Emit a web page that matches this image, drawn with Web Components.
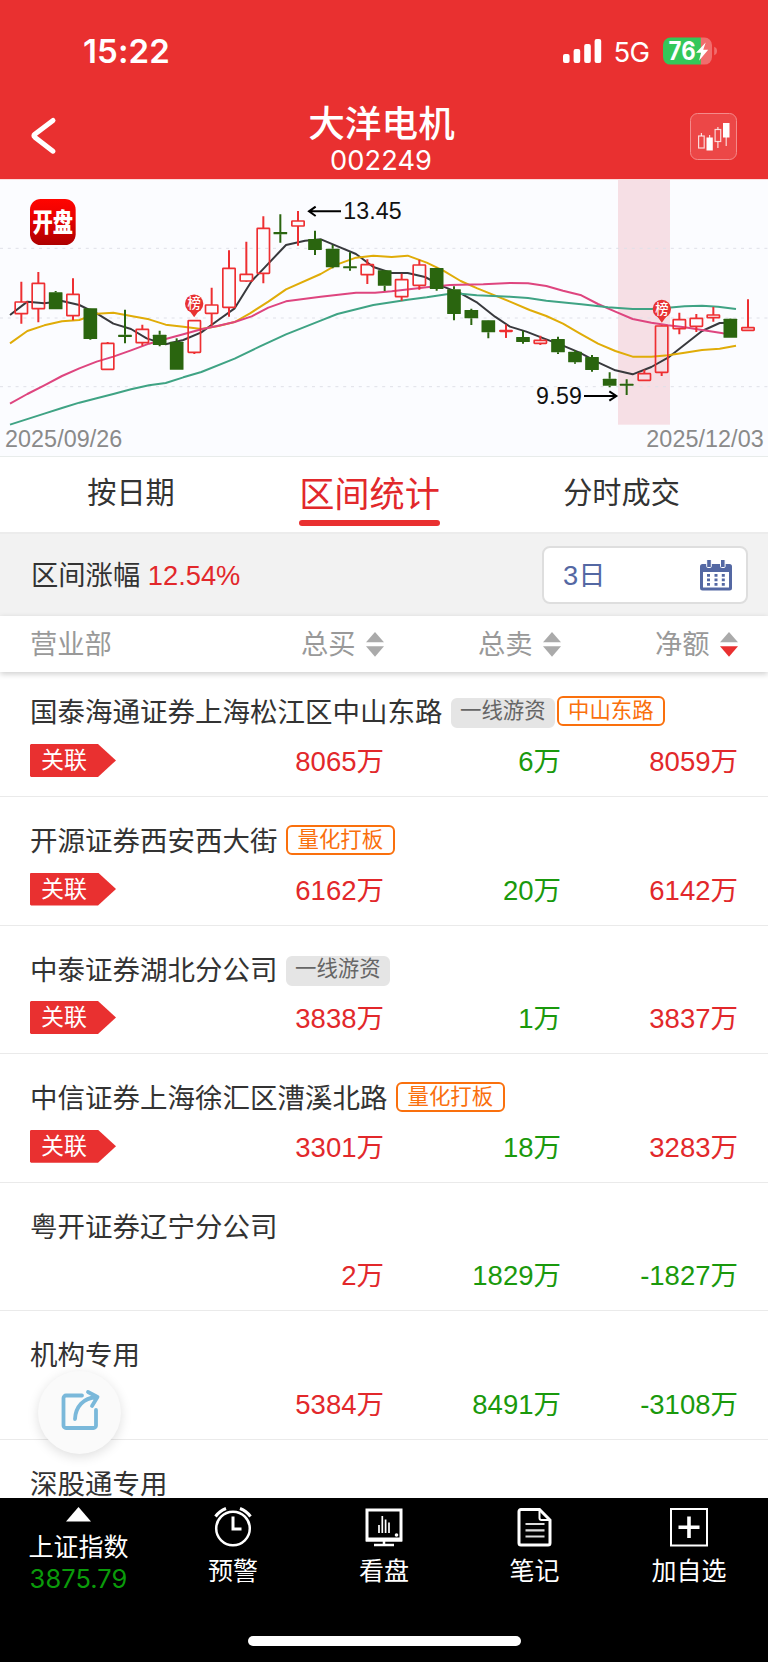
<!DOCTYPE html>
<html lang="zh-CN">
<head>
<meta charset="utf-8">
<title>大洋电机 002249</title>
<style>
html,body{margin:0;padding:0;background:#fff}
body{width:768px;height:1663px;overflow:hidden;font-family:"Liberation Sans","Noto Sans CJK SC",sans-serif;color:#333}
</style>
</head>
<body>
<stock-app></stock-app>
<script>
const define = (name, html, setup) => customElements.define(name, class extends HTMLElement {
  connectedCallback() {
    if (this.shadowRoot) return;
    const t = document.createElement('template');
    t.innerHTML = html;
    const root = this.attachShadow({mode: 'open'});
    root.appendChild(t.content.cloneNode(true));
    if (setup) setup(this, root);
  }
});

define('status-bar', `
<style>
:host{display:flex;height:102px;box-sizing:border-box;padding:33px 49.500px 0 83px;color:#fff;font-family:Inter,sans-serif;align-items:flex-start}
.time{flex:1;font-size:33px;font-weight:600;line-height:37px;letter-spacing:.1px}
svg{display:block}
.sig{margin:6px 12px 0 0}
.net{font-size:27.500px;line-height:39px;width:49px;letter-spacing:-.6px}
.bat{margin-top:4px}
</style>
<div class="time">15:22</div>
<svg class="sig" width="39" height="25" fill="#fff"><rect x="0" y="15" width="6.600" height="9" rx="2"/><rect x="10.600" y="10" width="6.600" height="14" rx="2"/><rect x="21.200" y="5" width="6.600" height="19" rx="2"/><rect x="31.600" y="0" width="6.600" height="24" rx="2"/></svg>
<div class="net">5G</div>
<svg class="bat" width="56" height="28" viewBox="0 0 56 28"><defs><clipPath id="b"><rect x="0" y=".6" width="49" height="27" rx="7.500"/></clipPath></defs>
<g clip-path="url(#b)"><rect width="38" height="28" fill="#34c759"/><rect x="37.800" width="12" height="28" fill="#f16d6d"/></g>
<path d="M51.200 9.800q2.800 1 2.800 4.200t-2.800 4.200z" fill="#f16d6d"/>
<text x="5.600" y="23" font-size="25" font-weight="700" fill="#fff" textLength="27" lengthAdjust="spacingAndGlyphs">76</text>
<path d="M42.700 5.500L33 15.800h5.100L36 23.800l9.200-11h-5z" fill="#fff"/></svg>`);

define('title-bar', `
<style>
:host{display:grid;grid-template-columns:1fr 200px 1fr;height:77px;color:#fff}
.back{padding:13px 0 0 29px}
.mid{text-align:center;display:flex;flex-direction:column;position:relative;left:-2.500px}
.name{font-size:36.600px;font-weight:500;line-height:46px;height:44px;white-space:nowrap;letter-spacing:.1px}
.code{font-family:Inter,sans-serif;font-size:27.200px;font-weight:400;line-height:30px;letter-spacing:.1px;margin-left:-1px}
.kl{justify-self:end;padding:10.500px 31.500px 0 0}
svg{display:block}
</style>
<div class="back"><svg width="30" height="42" fill="none" stroke="#fff" stroke-width="5" stroke-linecap="round" stroke-linejoin="round"><path d="M24 5.500L5.800 19.200q-1.800 1.500 0 3L24 36.200"/></svg></div>
<div class="mid"><div class="name"><slot name="name"></slot></div><div class="code"><slot name="code"></slot></div></div>
<div class="kl"><svg width="47" height="47" viewBox="0 0 47 47"><rect x=".5" y=".5" width="46" height="46" rx="7" fill="#ec4747" stroke="#f48a8a"/>
<g fill="none" stroke="#fff" stroke-opacity=".8" stroke-width="1.200"><rect x="8.600" y="23" width="5.600" height="12"/><path d="M11.400 20v3M19.600 22v3M27.900 14v2.500M27.900 28.500v6.500M36.200 23v10"/><rect x="25.100" y="16.500" width="5.600" height="12"/></g>
<path fill="#fff" d="M16.500 24.500h6.300V37.500h-6.300zM33 10h6.500v14.500H33z"/></svg></div>`);

/* Candles: [x, high, bodyTop, bodyBottom, low, rising], in thirds of a pixel. */
const CANDLES = [
[64,320,381,416,446,1],[115,291,325,401,442,1],[167,348,352,403,403,0],[219,310,358,422,436,1],[271,399,400,492,494,0],[323,501,505,583,583,1],[375,404,479,486,505,0],[427,449,463,503,512,1],[479,467,479,510,514,0],[530,490,500,584,584,0],[583,436,437,532,537,1],[635,338,390,415,452,1],[687,226,280,397,425,1],[739,200,298,318,320,1],
[790,124,160,295,325,1],[841,118,171,178,203,0],[894,108,138,153,212,1],[945,167,192,225,240,0],[998,210,221,277,280,0],[1050,232,274,280,287,0],[1102,253,269,299,327,1],[1154,285,286,332,348,0],[1205,296,314,365,377,1],[1258,254,270,331,344,1],[1310,278,279,342,347,0],[1362,334,343,417,436,0],[1414,401,405,430,450,0],[1465,435,436,472,490,0],[1518,449,467,469,488,1],
[1569,467,486,501,506,0],[1621,482,496,505,510,1],[1674,485,492,532,537,0],[1725,525,530,562,566,0],[1776,540,546,585,590,0],[1829,592,611,632,637,0],[1880,613,626,632,660,0],[1933,584,596,616,616,1],[1985,451,453,592,603,1],[2038,413,434,461,478,1],[2089,417,430,454,471,1],[2140,396,420,428,440,1],[2191,430,431,488,488,0],[2244,373,458,466,466,1]];
const AVERAGES = {
'#38393d':'30,420 82,380 133,385 186,378 238,390 290,415 340,446 393,462 440,490 497,508 550,495 604,472 655,435 704,400 755,318 780,292 858,210 915,197 963,193 1015,215 1068,237 1120,276 1175,294 1223,294 1275,306 1330,335 1382,355 1432,383 1485,425 1530,455 1579,470 1631,490 1689,512 1739,533 1794,562 1846,586 1898,598 1954,576 2004,548 2106,468 2159,444 2208,443',
'#e0ac08':'30,505 82,468 133,451 186,439 238,435 290,416 340,413 393,423 447,433 497,449 550,455 604,462 655,453 704,441 750,415 805,380 858,343 962,297 1012,268 1068,248 1120,242 1175,246 1223,242 1280,263 1330,287 1382,318 1432,340 1530,380 1589,405 1639,423 1689,446 1739,475 1794,506 1846,528 1898,545 1954,545 2004,541 2054,533 2106,525 2159,521 2208,512',
'#de457f':'30,686 82,657 133,631 186,603 238,580 290,560 340,545 393,526 447,506 497,492 550,478 604,463 655,452 704,441 755,424 805,398 858,379 962,365 1068,353 1125,353 1175,349 1280,337 1350,330 1450,328 1530,324 1584,325 1639,333 1689,347 1744,361 1794,387 1846,410 1898,432 1954,443 2004,451 2054,457 2106,465 2169,475 2208,480',
'#3fa384':'30,749 133,716 186,699 238,683 290,670 340,657 393,643 447,631 497,624 550,607 604,591 704,551 780,514 858,478 962,437 1012,417 1120,390 1223,374 1280,367 1340,358 1382,356 1430,361 1530,365 1584,369 1639,377 1744,388 1824,397 1898,402 1954,402 2004,398 2054,394 2106,392 2154,395 2208,402'};
define('k-line-chart', `
<style>
:host{display:block;height:278px;background:#fbfcff;border-top:1px solid #fbdcdc;border-bottom:1px solid #e8eceb;box-sizing:border-box}
svg{display:block;margin-top:-1px}
text{font-family:"Liberation Sans","Noto Sans CJK SC",sans-serif}
</style>
<svg width="768" height="278" viewBox="0 12 2304 834">
<defs><linearGradient id="g" x2="0" y2="1"><stop stop-color="#ff0500"/><stop offset=".35" stop-color="#ee0202"/><stop offset="1" stop-color="#ad0000"/></linearGradient></defs>
<rect x="1854" y="15" width="156" height="734" fill="#f6dfe5"/>
<path d="M0 220H2304M0 429H2304M0 635H2304" stroke="#dfe0e8" stroke-width="3" stroke-dasharray="9 14.400"/>
<g id="ma" fill="none" stroke-width="6" stroke-linejoin="round"></g>
<g id="k"></g>
<g id="pins"></g>
<rect x="90" y="72" width="137" height="138" rx="32" fill="url(#g)"/>
<text transform="translate(158.500 172) scale(1 1.280)" font-size="61" font-weight="900" fill="#fff" text-anchor="middle" style="font-family:'Noto Sans CJK SC',sans-serif">开盘</text>
<g fill="none" stroke="#000" stroke-width="6"><path d="M1023 109H928M947 95L927 109L947 123M1752 663H1847M1828 649L1849 663L1828 677"/></g>
<g font-size="69.500" fill="#111"><text x="1030" y="132" textLength="175">13.45</text><text x="1608" y="686" textLength="138">9.59</text></g>
<g font-size="70" fill="#8a8a8a"><text x="15" y="817" textLength="352">2025/09/26</text><text x="1939" y="817" textLength="352">2025/12/03</text></g>
</svg>`, (h, r) => {
  r.getElementById('ma').innerHTML = Object.entries(AVERAGES).map(([c, p]) => `<polyline stroke="${c}" points="${p}"/>`).join('');
  r.getElementById('k').innerHTML = CANDLES.map(([x, hi, t, b, lo, up]) => {
    const c = up ? '#ee2f32' : '#2a650f', w = up ? 37 : 41;
    return `<path d="M${x} ${hi}V${t}M${x} ${b}V${lo}" stroke="${c}" stroke-width="6"/><rect x="${x - w / 2}" y="${t}" width="${w}" height="${b - t}" rx="1.5" fill="${up ? 'none' : c}" ${up ? `stroke="${c}" stroke-width="5"` : ''}/>`;
  }).join('') + '<path d="M1518 449V488" stroke="#ee2f32" stroke-width="6"/><path d="M841 171V178M1050 274V280M375 479V486M1880 626V632" stroke="#2a650f" stroke-width="6"/>';
  r.getElementById('pins').innerHTML = [[582.5, 386], [1985.500, 402]].map(([x, y]) =>
    `<path d="M${x - 15} ${y + 20}L${x} ${y + 41}L${x + 15} ${y + 20}z" fill="#e83232"/><circle cx="${x}" cy="${y}" r="27.500" fill="#e83232"/><text x="${x}" y="${y + 14}" font-size="40" font-weight="500" fill="#fff" text-anchor="middle">榜</text>`).join('');
});

define('tab-bar', `
<style>
:host{display:grid;grid-template-columns:262px 215px 1fr;height:75px;background:#fff;text-align:center;font-size:29.200px;line-height:73px}
.on{color:#e2282b;font-size:35.200px;line-height:75px;justify-self:center;position:relative;height:75px}
.on::after{content:"";position:absolute;left:0;right:0;bottom:6px;height:6px;border-radius:3px;background:#e93030}
.r{margin-left:-2px}
</style>
<div>按日期</div><div class="on">区间统计</div><div class="r">分时成交</div>`);

define('range-filter', `
<style>
:host{display:flex;height:84px;background:#f2f2f2;border-top:2px solid #ececec;box-sizing:border-box;padding:0 20px 0 31px;justify-content:space-between;align-items:flex-start;font-size:27.300px}
.l{line-height:84px}
b{font-weight:400;color:#e2282b}
.box{box-sizing:border-box;width:206px;height:58px;margin-top:12px;border:2px solid #dedede;border-radius:8px;background:#fff;display:flex;justify-content:space-between;padding:0 14px 0 19px;color:#5468a3;line-height:56px}
svg{display:block;margin-top:12px}
</style>
<div class="l">区间涨幅 <b>12.54%</b></div>
<div class="box"><span>3日</span>
<svg width="32" height="31" viewBox="0 0 32 31"><rect y="4" width="32" height="26.500" rx="2.500" fill="#5468a3"/><path fill="#fff" d="M3 12h26v15.500H3z"/><g stroke="#fff" stroke-width="1"><rect x="6.700" y="-1" width="4.600" height="8.500" rx="1" fill="#5468a3"/><rect x="20.500" y="-1" width="4.600" height="8.500" rx="1" fill="#5468a3"/></g><path d="M8.500 14v12M16 14v12M23.300 14v12" stroke="#5468a3" stroke-width="3" stroke-dasharray="2.800 1.700"/></svg></div>`);

define('sort-label', `
<style>:host{display:flex;justify-content:flex-end;align-items:center;gap:10px}svg{display:block}</style>
<span><slot></slot></span><svg width="18" height="25"><path d="M9 0L18 10.300H0z" fill="#aaa"/><path id="d" d="M0 14.300h18L9 24.700z" fill="#aaa"/></svg>`,
(h, r) => { if (h.hasAttribute('desc')) r.getElementById('d').setAttribute('fill', '#e93030'); });

define('list-head', `
<style>
:host{display:grid;grid-template-columns:1fr 177px 177px;height:56px;padding:0 30.500px 0 30px;background:#fff;color:#999;font-size:27.300px;line-height:57px;box-shadow:0 2px 6px rgba(0,0,0,.2);position:relative;z-index:1}
.first{display:grid;grid-template-columns:1fr auto}
</style>
<div class="first"><span>营业部</span><sort-label>总买</sort-label></div><sort-label>总卖</sort-label><sort-label desc>净额</sort-label>`);

define('seat-tag', `
<style>
:host{display:block;box-sizing:border-box;height:30px;border-radius:6px;font-size:21.400px;line-height:26px;white-space:nowrap;border:2px solid #fa700d;color:#fa700d;padding:0 9.500px;margin-top:1px}
:host([plain]){border-color:#e5e5e5;background:#e5e5e5;color:#666;line-height:22px;padding:0 7px;margin-top:3px;margin-right:2px}
</style><slot></slot>`);

define('seat-row', `
<style>
:host{display:block;height:128.600px;box-sizing:border-box;border-bottom:1px solid #eaeaea;padding:28px 30px 0;font-size:27.500px}
.top{display:flex;height:32px;line-height:33px;white-space:nowrap}
.tags{display:flex;margin-left:8.500px;margin-top:0;height:32px;align-items:flex-start;position:relative;top:-1px}
.vals{display:grid;grid-template-columns:354px 177px 177px;height:33px;margin-top:15.500px;line-height:35px;text-align:right;color:#e2282b}
.first{display:flex;justify-content:space-between}
.flag{width:86px;height:33px;box-sizing:border-box;text-align:left;padding-left:11px;line-height:33px;background:#e93030;color:#fff;font-size:23px;clip-path:polygon(0 1px,1px 0,68px 0,100% 50%,68px 100%,1px 100%,0 32px)}
.g{color:#1a990c}
</style>
<div class="top"><span id="n"></span><div class="tags"><slot></slot></div></div>
<div class="vals"><div class="first"><span id="f"></span><span id="a"></span></div><span class="g" id="b"></span><span id="c"></span></div>`,
(h, r) => {
  const $ = i => r.getElementById(i), [a, b, c] = (h.getAttribute('values') || ',,').split(',');
  $('n').textContent = h.getAttribute('name');
  $('a').textContent = a; $('b').textContent = b; $('c').textContent = c;
  if (c.startsWith('-')) $('c').className = 'g';
  if (h.hasAttribute('linked')) { $('f').className = 'flag'; $('f').textContent = '关联'; }
});

define('share-button', `
<style>
:host{position:absolute;left:38px;top:1370.500px;width:83px;height:83px;border-radius:50%;background:#fafafa;box-shadow:0 3px 12px rgba(0,0,0,.13);z-index:2}
svg{display:block}
</style>
<svg width="83" height="83" viewBox="0 0 83 83" fill="none" stroke="#7ab8da" stroke-width="3.800" stroke-linecap="round" stroke-linejoin="round"><path d="M44 24.500H28a2.500 2.500 0 0 0-2.500 2.500V54.500a2.500 2.500 0 0 0 2.500 2.500h27.500a2.500 2.500 0 0 0 2.500-2.500V39"/><path d="M37 48C37.500 36 45 27 58.500 26M50 21l9.500 5-5.500 9"/></svg>`);

define('nav-item', `
<style>
:host{display:flex;flex-direction:column;align-items:center;padding-top:9px;font-size:25px;line-height:32px}
.i{height:40px;margin-bottom:7.500px}
::slotted(svg){display:block}
</style><div class="i"><slot name="icon"></slot></div><div><slot></slot></div>`);

define('bottom-nav', `
<style>
:host{position:absolute;left:0;top:1498px;width:768px;height:164px;background:#000;color:#fff;z-index:3;display:flex;flex-direction:column}
.row{display:grid;grid-template-columns:157px 152px 150px 151px 158px;flex:1}
.idx{display:flex;flex-direction:column;align-items:center;padding-top:9px;font-size:25px}
.t{line-height:32px;margin-top:9px}
.n{font-family:Inter,sans-serif;font-size:25.400px;color:#0a9b0a;line-height:30px;margin-top:1px;letter-spacing:.1px}
.home{width:273px;height:10px;border-radius:5px;background:#fff;margin:0 auto 16px}
svg{display:block}
</style>
<div class="row">
<div class="idx"><svg width="25" height="15"><path d="M12.500 0L25 14.500H0z" fill="#fff"/></svg><div class="t">上证指数</div><div class="n">3875.79</div></div>
<nav-item><svg slot="icon" width="40" height="40" fill="none" stroke="#fff" stroke-width="2.500"><circle cx="20" cy="21.500" r="16.800"/><path d="M20 9.500V22h8.500" stroke-width="3"/><path d="M2.500 9.500Q6.500 4 13 1.500M37.500 9.500Q33.500 4 27 1.500" stroke-width="3"/></svg>预警</nav-item>
<nav-item><svg slot="icon" width="38" height="40" fill="none" stroke="#fff"><path d="M2 3h34v30H2z" stroke-width="3"/><path d="M1 32.500h36" stroke-width="4"/><path d="M19 33v5M9 38h20" stroke-width="2.500"/><path d="M14 18v8M17.300 9v17M20.600 12.500V26M24 15.500V26" stroke-width="1.700"/><circle cx="31.500" cy="28" r="1.800" fill="#fff" stroke="none"/></svg>看盘</nav-item>
<nav-item><svg slot="icon" width="36" height="40" fill="none" stroke="#fff" stroke-width="3"><path d="M4 2.500h18.500L33 13v23a2 2 0 0 1-2 2H4a2 2 0 0 1-2-2V4.500a2 2 0 0 1 2-2z"/><path d="M22.500 3v8a2 2 0 0 0 2 2H33" stroke-width="2"/><path d="M8.500 17h19M8.500 23.300h19M8.500 29.500h19" stroke-width="2.200" stroke="#ddd"/></svg>笔记</nav-item>
<nav-item><svg slot="icon" width="38" height="40" fill="none" stroke="#fff"><path d="M1 2h36v36.500H1z" stroke-width="2"/><path d="M19 9.500v21.500M8.500 20.300h21" stroke-width="3.600"/></svg>加自选</nav-item>
</div><div class="home"></div>`);

define('stock-app', `
<style>
:host{display:block;position:relative;width:768px;height:1663px;overflow:hidden;background:#fff}
header{background:#e93030}
.list{margin-top:-3.600px}
</style>
<header><status-bar></status-bar><title-bar><span slot="name">大洋电机</span><span slot="code">002249</span></title-bar></header>
<k-line-chart></k-line-chart>
<tab-bar></tab-bar>
<range-filter></range-filter>
<list-head></list-head>
<div class="list">
<seat-row linked name="国泰海通证券上海松江区中山东路" values="8065万,6万,8059万"><seat-tag plain>一线游资</seat-tag><seat-tag>中山东路</seat-tag></seat-row>
<seat-row linked name="开源证券西安西大街" values="6162万,20万,6142万"><seat-tag>量化打板</seat-tag></seat-row>
<seat-row linked name="中泰证券湖北分公司" values="3838万,1万,3837万"><seat-tag plain>一线游资</seat-tag></seat-row>
<seat-row linked name="中信证券上海徐汇区漕溪北路" values="3301万,18万,3283万"><seat-tag>量化打板</seat-tag></seat-row>
<seat-row name="粤开证券辽宁分公司" values="2万,1829万,-1827万"></seat-row>
<seat-row name="机构专用" values="5384万,8491万,-3108万"></seat-row>
<seat-row name="深股通专用"></seat-row>
</div>
<share-button></share-button>
<bottom-nav></bottom-nav>`);
</script>
</body>
</html>
